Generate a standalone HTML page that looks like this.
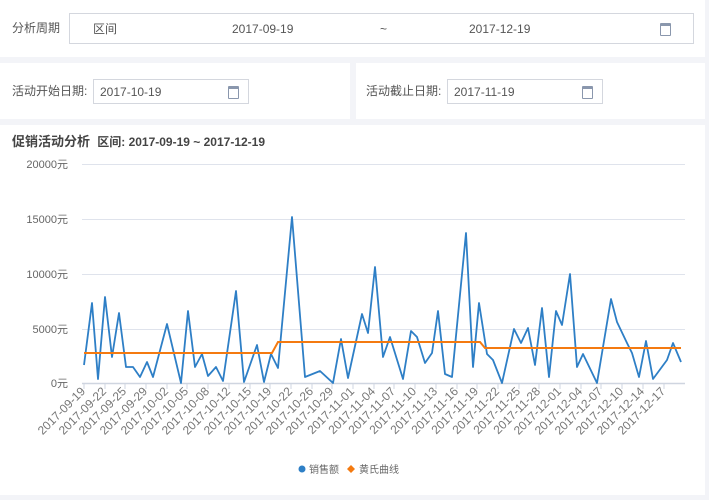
<!DOCTYPE html>
<html><head><meta charset="utf-8"><style>
body{margin:0;width:709px;height:500px;background:#f3f4f8;font-family:"Liberation Sans","Noto Sans CJK SC",sans-serif;position:relative;overflow:hidden;color:#555}
.p{position:absolute;background:#fff}
.in{position:absolute;border:1px solid #d4d7de;background:#fff;box-sizing:border-box;font-size:13px;color:#555}
.t{position:absolute;font-size:12px;line-height:14px;color:#555;white-space:nowrap}
.cal{position:absolute;width:9px;height:9px;border:1.5px solid #8a97ad;border-top-width:3px;border-radius:1px}
</style></head><body>
<div class="p" style="left:0;top:0;width:705px;height:57px"></div>
<div class="p" style="left:0;top:63px;width:350px;height:56px"></div>
<div class="p" style="left:356px;top:63px;width:349px;height:56px"></div>
<div class="p" style="left:0;top:125px;width:705px;height:370px"></div>

<div class="t" style="left:12px;top:21px">分析周期</div>
<div class="in" style="left:69px;top:13px;width:625px;height:31px">
 <span class="t" style="left:23px;top:8px">区间</span>
 <span class="t" style="left:162px;top:8px">2017-09-19</span>
 <span class="t" style="left:310px;top:8px">~</span>
 <span class="t" style="left:399px;top:8px">2017-12-19</span>
 <div class="cal" style="left:590px;top:9px"></div>
</div>

<div class="t" style="left:12px;top:84px">活动开始日期:</div>
<div class="in" style="left:93px;top:79px;width:156px;height:25px">
 <span class="t" style="left:6px;top:5px">2017-10-19</span>
 <div class="cal" style="left:134px;top:6px"></div>
</div>
<div class="t" style="left:366px;top:84px">活动截止日期:</div>
<div class="in" style="left:447px;top:79px;width:156px;height:25px">
 <span class="t" style="left:6px;top:5px">2017-11-19</span>
 <div class="cal" style="left:134px;top:6px"></div>
</div>

<div class="t" style="left:12px;top:135px;font-size:13px;font-weight:bold;color:#444">促销活动分析 &nbsp;<span style="font-size:12px">区间: 2017-09-19 ~ 2017-12-19</span></div>

<svg width="709" height="500" style="position:absolute;left:0;top:0" font-family="Liberation Sans,Noto Sans CJK SC,sans-serif">
<g stroke="#dfe3ec" stroke-width="1">
<line x1="82" y1="164.5" x2="685" y2="164.5"/><line x1="82" y1="219.5" x2="685" y2="219.5"/><line x1="82" y1="274.5" x2="685" y2="274.5"/><line x1="82" y1="329.5" x2="685" y2="329.5"/><line x1="82" y1="383.5" x2="685" y2="383.5" stroke="#cfd5e0" stroke-width="1.5"/>
</g>
<g font-size="11" fill="#666" text-anchor="end">
<text x="68" y="168">20000元</text><text x="68" y="223">15000元</text><text x="68" y="278">10000元</text><text x="68" y="333">5000元</text><text x="68" y="387">0元</text>
</g>
<g font-size="12" fill="#777" text-anchor="end">
<text transform="translate(86,392) rotate(-45)">2017-09-19</text>
<text transform="translate(107,392) rotate(-45)">2017-09-22</text>
<text transform="translate(127,392) rotate(-45)">2017-09-25</text>
<text transform="translate(148,392) rotate(-45)">2017-09-29</text>
<text transform="translate(169,392) rotate(-45)">2017-10-02</text>
<text transform="translate(189,392) rotate(-45)">2017-10-05</text>
<text transform="translate(210,392) rotate(-45)">2017-10-08</text>
<text transform="translate(231,392) rotate(-45)">2017-10-12</text>
<text transform="translate(252,392) rotate(-45)">2017-10-15</text>
<text transform="translate(272,392) rotate(-45)">2017-10-19</text>
<text transform="translate(293,392) rotate(-45)">2017-10-22</text>
<text transform="translate(314,392) rotate(-45)">2017-10-26</text>
<text transform="translate(334,392) rotate(-45)">2017-10-29</text>
<text transform="translate(355,392) rotate(-45)">2017-11-01</text>
<text transform="translate(376,392) rotate(-45)">2017-11-04</text>
<text transform="translate(396,392) rotate(-45)">2017-11-07</text>
<text transform="translate(417,392) rotate(-45)">2017-11-10</text>
<text transform="translate(438,392) rotate(-45)">2017-11-13</text>
<text transform="translate(459,392) rotate(-45)">2017-11-16</text>
<text transform="translate(479,392) rotate(-45)">2017-11-19</text>
<text transform="translate(500,392) rotate(-45)">2017-11-22</text>
<text transform="translate(521,392) rotate(-45)">2017-11-25</text>
<text transform="translate(541,392) rotate(-45)">2017-11-28</text>
<text transform="translate(562,392) rotate(-45)">2017-12-01</text>
<text transform="translate(583,392) rotate(-45)">2017-12-04</text>
<text transform="translate(603,392) rotate(-45)">2017-12-07</text>
<text transform="translate(624,392) rotate(-45)">2017-12-10</text>
<text transform="translate(645,392) rotate(-45)">2017-12-14</text>
<text transform="translate(666,392) rotate(-45)">2017-12-17</text>
</g>
<g stroke="#cfd5e0" stroke-width="1">
<path d="M84 384v5M105 384v5M125 384v5M146 384v5M167 384v5M187 384v5M208 384v5M229 384v5M250 384v5M270 384v5M291 384v5M312 384v5M332 384v5M353 384v5M374 384v5M394 384v5M415 384v5M436 384v5M457 384v5M477 384v5M498 384v5M519 384v5M539 384v5M560 384v5M581 384v5M601 384v5M622 384v5M643 384v5M664 384v5"/>
</g>
<polyline fill="none" stroke="#2e7fc6" stroke-width="1.8" stroke-linejoin="round" points="84,365 92,303 98,379 105,297 112,357 119,313 126,367 133,367 140,377 147,362 153,377 167,324 181,383 188,311 195,367 202,354 208,376 216,367 223,381 236,291 244,382 257,345 264,382 271,354 278,368 292,217 305,377 320,371 333,383 341,339 348,378 362,314 368,333 375,267 383,357 390,337 403,379 411,331 417,337 425,363 432,353 438,311 445,374 452,377 466,233 473,367 479,303 487,354 493,360 502,383 514,329 521,343 528,328 535,365 542,308 549,377 556,311 562,325 570,274 577,367 583,354 597,383 611,299 617,322 627,343 632,353 639,377 646,341 653,379 667,360 673,343 681,362"/>
<polyline fill="none" stroke="#f47a10" stroke-width="2" points="84,353 272,353 278,342 480,342 485,348 681,348"/>
<circle cx="302" cy="469" r="3.5" fill="#2e7fc6"/>
<text x="309" y="473" font-size="10" fill="#666">销售额</text>
<path d="M351 465 L355 469 L351 473 L347 469Z" fill="#f47a10"/>
<text x="359" y="473" font-size="10" fill="#666">黄氏曲线</text>
</svg>
</body></html>
